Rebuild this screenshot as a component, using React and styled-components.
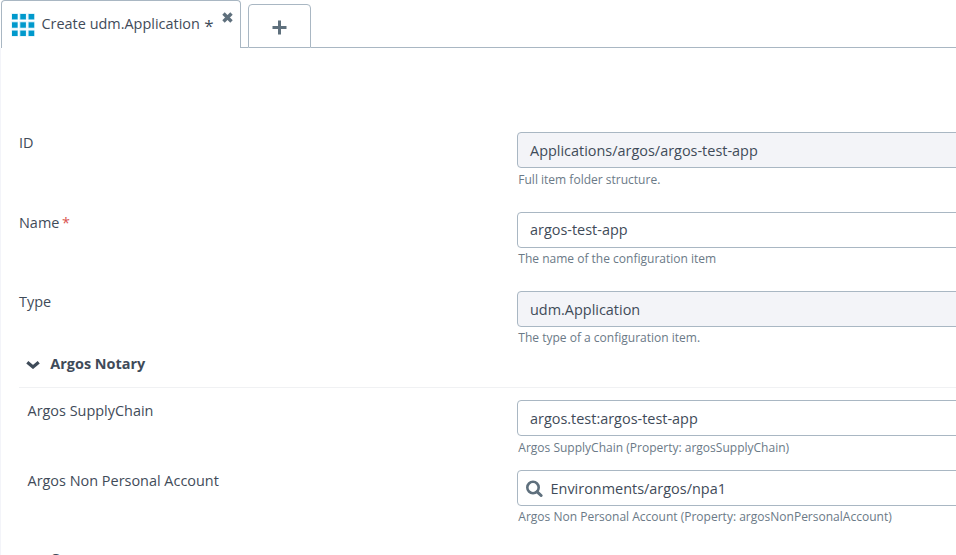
import React from "react";
import styled, { createGlobalStyle } from "styled-components";

const Global = createGlobalStyle`
  *, *::before, *::after { box-sizing: border-box; }
  html, body { margin: 0; background: #fff; overflow: hidden; }
  body { font-family: "Open Sans", "Noto Sans", sans-serif; font-size: 14.44px; color: #3f4b59; }
  svg { display: block; flex: none; }
`;

const Page = styled.div`
  width: 956px;
  height: 555px;
  overflow: hidden;
  display: flex;
  flex-direction: column;
`;

const TabBar = styled.div`
  display: flex;
  align-items: flex-end;
  height: 48px;
  flex: none;
  padding-left: 1px;
`;

const Tab = styled.div`
  display: flex;
  width: 240px;
  height: 48px;
  padding: 0 7px 0 9px;
  border: 1px solid #a9b7c3;
  border-bottom: 0;
  border-radius: 4px 4px 0 0;
`;

const TabIcon = styled.div`
  padding-top: 12px;
  width: 30.5px;
`;

const TabTitle = styled.span`
  line-height: 20px;
  padding-top: 13px;
  white-space: pre;
`;

const Modified = styled.span`
  font-size: 17px;
  line-height: 20px;
  padding: 15px 0 0 4.5px;
`;

const CloseButton = styled.div`
  margin-left: auto;
  padding-top: 11px;
`;

const Gap = styled.div`
  width: ${(p) => p.$width};
  flex: ${(p) => (p.$width ? "none" : 1)};
  height: 1px;
  background: #a9b7c3;
`;

const AddTab = styled.div`
  display: flex;
  justify-content: center;
  width: 63px;
  height: 44px;
  padding-top: 15px;
  border: 1px solid #a9b7c3;
  border-radius: 4px 4px 0 0;
`;

const Content = styled.main`
  flex: 1;
  min-height: 0;
  padding: 84px 0 0 18px;
  border-left: 1px solid #f3f4f9;
`;

const Row = styled.div`
  display: flex;
  height: ${(p) => p.$height}px;
`;

const Label = styled.label`
  width: 498px;
  flex: none;
  line-height: 20px;
  padding: 1px 0 0 ${(p) => (p.$nested ? 8.5 : 0)}px;
`;

const Required = styled.span`
  color: #d9534f;
  margin-left: 2.5px;
`;

const Field = styled.div`
  flex: 1;
`;

const Input = styled.div`
  display: flex;
  align-items: center;
  width: 460px;
  height: 36px;
  padding-left: ${(p) => (p.$lookup ? 7.5 : 12)}px;
  padding-bottom: ${(p) => p.$lift}px;
  gap: 8px;
  border: 1px solid #a9b7c3;
  border-radius: 4px;
  background: ${(p) => (p.$disabled ? "#f3f4f8" : "#fff")};
  white-space: nowrap;
`;

const Hint = styled.div`
  font-size: 12.02px;
  line-height: 16px;
  padding: ${(p) => p.$gap}px 0 0 1.3px;
  color: #6b7a87;
  white-space: nowrap;
`;

const Section = styled.div`
  display: flex;
  align-items: center;
  gap: 10.3px;
  height: 46px;
  padding-left: 7px;
  font-weight: 700;
  border-bottom: ${(p) => (p.$last ? 0 : "1px solid #f0f1f3")};
`;

const SectionTitle = styled.span`
  padding-bottom: 2px;
`;

const SectionBody = styled.div`
  padding-top: 12px;
`;

function GridIcon() {
  return (
    <svg width="24" height="24" viewBox="0 0 24 24">
      <rect x="0.5" y="0.3" width="23.2" height="23.2" fill="#d5eef8" />
      <path d="M7.65 0v24M16.05 0v24M0 7.65h24M0 16.05h24" stroke="#fff" strokeWidth="1.2" />
      {[1, 9.3, 17.6].map((y) =>
        [1, 9.3, 17.6].map((x) => (
          <rect key={`${x}-${y}`} x={x} y={y} width="5.6" height="5.4" fill="#0099cc" />
        ))
      )}
    </svg>
  );
}

function CloseIcon() {
  return (
    <svg width="11" height="11" viewBox="0 0 11 11" stroke="#5f707d" strokeWidth="3.4">
      <path d="M1.5 1.5 9.5 9.5M9.5 1.5 1.5 9.5" />
    </svg>
  );
}

function PlusIcon() {
  return (
    <svg width="15" height="15" viewBox="0 0 15 15" stroke="#5f707d" strokeWidth="3">
      <path d="M7.5 .5v14M.5 7.5h14" />
    </svg>
  );
}

function ChevronIcon() {
  return (
    <svg width="14" height="9" viewBox="0 0 14 9" fill="none" stroke="#3f4b59" strokeWidth="3.2">
      <path d="M1.3 2.2 7 7 12.7 2.2" />
    </svg>
  );
}

function SearchIcon() {
  return (
    <svg width="17" height="17" viewBox="0 0 17 17" fill="none" stroke="#5f707d">
      <circle cx="7" cy="7.5" r="5.7" strokeWidth="2.6" />
      <path d="m11.2 11.8 3.9 3.7" strokeWidth="3" strokeLinecap="round" />
    </svg>
  );
}

function FormRow({ label, value, hint, height, hintGap = 3, lift = 0, required, disabled, nested, lookup }) {
  return (
    <Row $height={height}>
      <Label $nested={nested}>
        {label}
        {required && <Required>*</Required>}
      </Label>
      <Field>
        <Input $disabled={disabled} $lookup={lookup} $lift={lift}>
          {lookup && <SearchIcon />}
          {value}
        </Input>
        <Hint $gap={hintGap}>{hint}</Hint>
      </Field>
    </Row>
  );
}

export default function App() {
  return (
    <Page>
      <Global />
      <TabBar>
        <Tab>
          <TabIcon><GridIcon /></TabIcon>
          <TabTitle>Create udm.Application</TabTitle>
          <Modified>*</Modified>
          <CloseButton><CloseIcon /></CloseButton>
        </Tab>
        <Gap $width="7px" />
        <AddTab><PlusIcon /></AddTab>
        <Gap />
      </TabBar>
      <Content>
        <FormRow label="ID" value="Applications/argos/argos-test-app" hint="Full item folder structure." height={80} hintGap={4} disabled />
        <FormRow label="Name" value="argos-test-app" hint="The name of the configuration item" height={79} lift={2} required />
        <FormRow label="Type" value="udm.Application" hint="The type of a configuration item." height={51} disabled />
        <Section><ChevronIcon /><SectionTitle>Argos Notary</SectionTitle></Section>
        <SectionBody>
          <FormRow label="Argos SupplyChain" value="argos.test:argos-test-app" hint="Argos SupplyChain (Property: argosSupplyChain)" height={70} hintGap={4} nested />
          <FormRow label="Argos Non Personal Account" value="Environments/argos/npa1" hint="Argos Non Personal Account (Property: argosNonPersonalAccount)" height={66} nested lookup />
        </SectionBody>
        <Section $last><ChevronIcon /><SectionTitle>Common</SectionTitle></Section>
      </Content>
    </Page>
  );
}
